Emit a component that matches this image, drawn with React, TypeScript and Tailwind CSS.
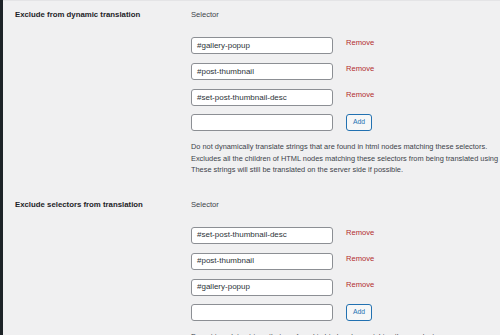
import React from 'react';

const font = { fontFamily: '"Liberation Sans", Arial, sans-serif' };

type Section = {
  label: string;
  values: string[];
  desc: string[];
};

const sections: Section[] = [
  {
    label: 'Exclude from dynamic translation',
    values: ['#gallery-popup', '#post-thumbnail', '#set-post-thumbnail-desc'],
    desc: [
      'Do not dynamically translate strings that are found in html nodes matching these selectors.',
      'Excludes all the children of HTML nodes matching these selectors from being translated using JavaScript.',
      'These strings will still be translated on the server side if possible.',
    ],
  },
  {
    label: 'Exclude selectors from translation',
    values: ['#set-post-thumbnail-desc', '#post-thumbnail', '#gallery-popup'],
    desc: [
      'Do not translate strings that are found in html nodes matching these selectors.',
      'Excludes all the children of HTML nodes matching these selectors from being translated.',
    ],
  },
];

function SelectorRow({ value }: { value: string }) {
  return (
    <div className="flex items-start">
      <div className="w-[142px] h-[17px] shrink-0 bg-white border border-[#8c8f94] rounded-[3px] px-[5px] flex items-center text-[8px] text-[#2c3338]">
        {value}
      </div>
      <span className="ml-[13px] mt-[1px] text-[7.6px] leading-[10px] text-[#b32d2e]">Remove</span>
    </div>
  );
}

function SettingBlock({ s }: { s: Section }) {
  return (
    <div className="flex">
      <div className="w-[188px] shrink-0 pl-[12px] text-[7.8px] leading-[10px] font-bold text-[#1d2327]">
        {s.label}
      </div>
      <div className="flex flex-col">
        <div className="text-[7.6px] leading-[10px] text-[#3c434a]">Selector</div>
        <div className="mt-[17px] flex flex-col gap-[9px]">
          {s.values.map((v) => (
            <SelectorRow key={v} value={v} />
          ))}
          <div className="flex items-start -mt-[1px]">
            <div className="w-[142px] h-[17px] shrink-0 bg-white border border-[#8c8f94] rounded-[3px]" />
            <button className="ml-[13px] w-[26px] h-[17px] border border-[#2271b1] bg-[#f6f7f7] rounded-[3px] text-[6.8px] text-[#2271b1] flex items-center justify-center">
              Add
            </button>
          </div>
        </div>
        <div className="mt-[10px] text-[7.4px] leading-[11.5px] text-[#3c434a] whitespace-nowrap">
          {s.desc.map((d) => (
            <div key={d}>{d}</div>
          ))}
        </div>
      </div>
    </div>
  );
}

export default function App() {
  return (
    <div className="w-[500px] h-[335px] overflow-hidden flex bg-[#f0f0f1]" style={font}>
      <div className="w-[3px] shrink-0 bg-[#1d2327]" />
      <div className="flex-1 overflow-hidden border-t border-[#e4e4e6] pt-[9px]">
        <SettingBlock s={sections[0]} />
        <div className="mt-[24px]">
          <SettingBlock s={sections[1]} />
        </div>
      </div>
    </div>
  );
}
